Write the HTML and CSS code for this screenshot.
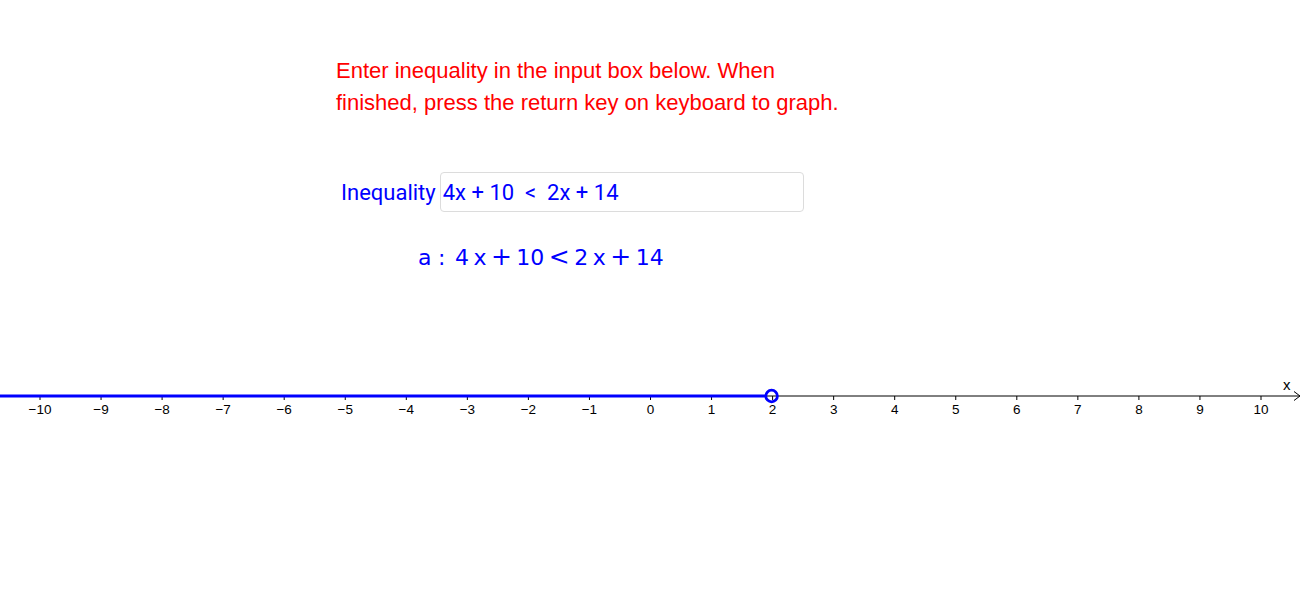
FILE: index.html
```html
<!DOCTYPE html>
<html lang="en">
<head>
  <meta charset="UTF-8" />
  <title>Graphing Inequalities</title>
  <link rel="stylesheet" href="styles.css">
</head>
<body>
  <div class="sheet">
    <p class="note">Enter inequality in the input box below. When<br>finished, press the return key on keyboard to graph.</p>

    <div class="input-row">
      <label for="ineq">Inequality</label>
      <input id="ineq" type="text" value="4x + 10  <  2x + 14" />
    </div>

    <div class="formula">a <span class="colon">:</span> 4 x <span class="op">+</span> 10 <span class="op">&lt;</span> 2 x <span class="op">+</span> 14</div>

    <svg class="axis" viewBox="0 0 1303 60" width="1303" height="60">
      <line x1="0" y1="30" x2="1300" y2="30" stroke="#000" stroke-width="1" />
      <polyline points="1294,25.5 1300,30 1294,34.5" fill="none" stroke="#000" stroke-width="1" />
      <text x="1283" y="24" class="axis-name">x</text>
      <g id="ticks"></g>
      <line x1="0" y1="30" x2="765" y2="30" stroke="#0000ff" stroke-width="3" />
      <circle cx="771.6" cy="30" r="5.8" fill="none" stroke="#0000ff" stroke-width="2.8" />
    </svg>
  </div>

  <script>
    const ticks = document.getElementById("ticks");
    const ns = "http://www.w3.org/2000/svg";
    for (let k = -10; k <= 10; k++) {
      const x = 650.5 + k * 61.05;
      const t = document.createElementNS(ns, "line");
      t.setAttribute("x1", x);
      t.setAttribute("x2", x);
      t.setAttribute("y1", 30);
      t.setAttribute("y2", 34);
      t.setAttribute("stroke", "#000");
      ticks.appendChild(t);
      const lbl = document.createElementNS(ns, "text");
      lbl.setAttribute("x", x);
      lbl.setAttribute("y", 48);
      lbl.setAttribute("class", "tick-label");
      lbl.textContent = k < 0 ? "\u2212" + (-k) : String(k);
      ticks.appendChild(lbl);
    }
  </script>
</body>
</html>
```

FILE: styles.css
```css
body {
  margin: 0;
  background: #fff;
  font-family: 'Liberation Sans', Arial, sans-serif;
}
.sheet {
  width: 1303px;
  height: 599px;
  overflow: hidden;
}
.note {
  margin: 0;
  padding: 55px 0 0 336px;
  color: #ff0000;
  font-size: 22px;
  line-height: 32px;
}
.input-row {
  display: flex;
  align-items: center;
  margin: 53px 0 0 341px;
  gap: 4px;
}
.input-row label {
  color: #0000ff;
  font-family: Roboto, sans-serif;
  font-size: 22px;
}
.input-row input {
  width: 364px;
  height: 40px;
  box-sizing: border-box;
  padding: 0 2px;
  border: 1px solid #dcdcdc;
  border-radius: 4px;
  color: #0000ff;
  font-family: Roboto, sans-serif;
  font-size: 22px;
}
.formula {
  margin: 32px 0 0 418px;
  color: #0000ff;
  font-family: 'DejaVu Sans', sans-serif;
  font-size: 22px;
  line-height: 26px;
  height: 26px;
  word-spacing: -2.5px;
}
.formula .colon {
  margin: 0 5px 0 2px;
}
.formula .op {
  font-size: 25px;
}
.axis {
  display: block;
  margin-top: 96px;
}
.tick-label {
  font-family: 'Liberation Sans', Arial, sans-serif;
  font-size: 13.5px;
  text-anchor: middle;
  fill: #000;
}
.axis-name {
  font-family: 'Liberation Sans', Arial, sans-serif;
  font-size: 15px;
  fill: #000;
}
```
